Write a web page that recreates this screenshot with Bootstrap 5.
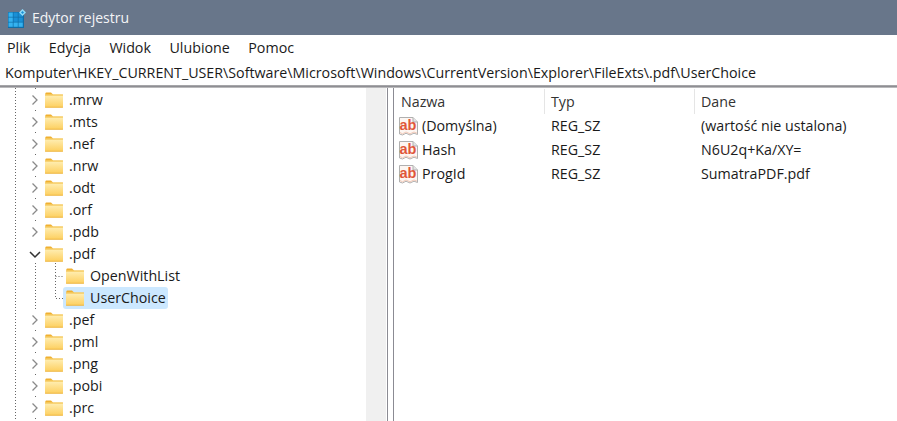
<!DOCTYPE html>
<html lang="pl">
<head>
<meta charset="utf-8">
<title>Edytor rejestru</title>
<link href="https://cdn.jsdelivr.net/npm/bootstrap@5.3.0/dist/css/bootstrap.min.css" rel="stylesheet">
<style>
html,body{height:421px;overflow:hidden;background:#fff}
body{font-family:"Open Sans","Noto Sans",sans-serif;font-size:14.25px;color:#1a1a1a;line-height:20px}
.titlebar{height:35px;background:#68768a;color:#f4f5f7;padding-left:7px;gap:6px;font-size:14px}
.menubar{height:25px;gap:18.5px;padding:0 7px;font-size:14.25px}
.addr{height:25px;padding-left:5px;white-space:nowrap}
.rule{height:3px;background:#8e8e93;border-top:1px solid #a5a5a8;border-bottom:1px solid #b9b9bb}
.panes{height:333px;overflow:hidden}
.treepane{width:366px;position:relative;padding-top:1px}
.trow{height:22px;padding-left:29px}
.trow.sub{padding-left:63px}
.chev{width:12px;height:12px;flex:none;margin-right:4px}
.fold{width:18px;height:16px;flex:none;margin-right:6px}
.sub .fold{margin-left:3px}
.sel{background:#cce8ff;border-radius:3px;padding-right:2px;height:22px}
.guides{position:absolute;left:0;top:0;width:366px;height:333px;pointer-events:none}
.scrollstrip{width:20px;background:#f0f0f0}
.gap1{width:1px}
.vline{width:1px;background:#8b8b93}
.gap5{width:5px}
.listpane{flex:1;padding-top:1px}
.hrow{height:25px;color:#333}
.cname{width:151px;padding-left:7px}
.ctype{width:150px;padding-left:6px}
.hrow .cname,.hrow .ctype{border-right:1px solid #e5e5e5;height:25px;line-height:25px}
.hrow .cdata{padding-left:6px;line-height:25px}
.lrow{height:24px}
.lrow .cname{padding-left:4px;display:flex;align-items:center;gap:3px}
.lrow .cdata{padding-left:6px}
.ab{width:21px;height:21px;flex:none}
.gapfix{margin-top:1px}
</style>
</head>
<body>
<svg width="0" height="0" class="d-block" style="position:absolute">
<defs>
<linearGradient id="fg" x1="0" y1="0" x2="0" y2="1"><stop offset="0" stop-color="#fff0b8"/><stop offset="1" stop-color="#fdcf5e"/></linearGradient>
<symbol id="folder" viewBox="0 0 18 16">
<path d="M0.5 3V1.2Q0.5 .5 1.2 .5H6L8 2.5V3Z" fill="#f0b030"/>
<rect x="0" y="2.5" width="18" height="13" rx=".8" fill="url(#fg)"/>
<rect x="0" y="2.5" width="18" height="1" fill="#f2b93a"/>
<rect x="0" y="14.8" width="18" height=".8" fill="#e9b03c"/>
</symbol>
<symbol id="cr" viewBox="0 0 12 12"><path d="M3.5 1.5L8 6L3.5 10.5" fill="none" stroke="#8a8a8a" stroke-width="1.3"/></symbol>
<symbol id="cd" viewBox="0 0 12 12"><path d="M1 4L6 9L11 4" fill="none" stroke="#333" stroke-width="1.5"/></symbol>
<symbol id="abi" viewBox="0 0 21 21">
<path d="M1.5 1.5H15L19.5 6V18.5L16 17.2L12 19L8 17.2L4.5 19L1.5 18Z" fill="#fdf6f2" stroke="#b0b0b0" stroke-width="1"/>
<path d="M15 1.5V6H19.5" fill="#e4e4e4" stroke="#b0b0b0" stroke-width="1"/>
<path d="M2 16.5L4.5 17.8L8 16L12 17.8L16 16L19 17.2" fill="none" stroke="#f2c9b8" stroke-width="1"/>
<text x="10" y="14.2" text-anchor="middle" font-family="Liberation Sans" font-weight="700" font-size="14.5" fill="#e0573a">ab</text>
</symbol>
</defs>
</svg>

<div class="titlebar d-flex align-items-center">
<svg width="19" height="19" viewBox="0 0 19 19" class="gapfix">
<rect x="1" y="3" width="16" height="16" fill="#0f6ea8"/>
<g fill="#35b2f0"><rect x="1.5" y="3.5" width="4.3" height="4.3"/><rect x="6.5" y="3.5" width="4.3" height="4.3" fill="#1a90d6"/><rect x="11.5" y="3.5" width="4.3" height="4.3" fill="#1a90d6"/>
<rect x="1.5" y="8.5" width="4.3" height="4.3"/><rect x="6.5" y="8.5" width="4.3" height="4.3" fill="#1a90d6"/><rect x="11.5" y="8.5" width="4.3" height="4.3" fill="#1a90d6"/>
<rect x="1.5" y="13.5" width="4.3" height="4.3"/><rect x="6.5" y="13.5" width="4.3" height="4.3"/><rect x="11.5" y="13.5" width="4.3" height="4.3"/></g>
<path d="M15.5 0L19 3.5L15.5 7L12 3.5Z" fill="#8fdcfa"/>
<path d="M15.5 2L17 3.5L15.5 5L14 3.5Z" fill="#1a90d6"/>
</svg>
<span>Edytor rejestru</span>
</div>
<div class="menubar d-flex align-items-center"><span>Plik</span><span>Edycja</span><span>Widok</span><span>Ulubione</span><span>Pomoc</span></div>
<div class="addr d-flex align-items-center">Komputer\HKEY_CURRENT_USER\Software\Microsoft\Windows\CurrentVersion\Explorer\FileExts\.pdf\UserChoice</div>
<div class="rule"></div>
<div class="panes d-flex">
<div class="treepane">
<svg class="guides"><g fill="none" stroke="#666">
<path d="M15.5 0V333" stroke-dasharray="1 2"/>
<path d="M35.5 0V154M35.5 220V333" stroke-dasharray="1 21"/>
<path d="M35.5 175V220" stroke-dasharray="1 2"/>
<path d="M55.5 175V210.5H63M55.5 188.5H63" stroke-dasharray="1 2"/>
</g></svg>
<div class="trow d-flex align-items-center"><svg class="chev"><use href="#cr"/></svg><svg class="fold"><use href="#folder"/></svg>.mrw</div>
<div class="trow d-flex align-items-center"><svg class="chev"><use href="#cr"/></svg><svg class="fold"><use href="#folder"/></svg>.mts</div>
<div class="trow d-flex align-items-center"><svg class="chev"><use href="#cr"/></svg><svg class="fold"><use href="#folder"/></svg>.nef</div>
<div class="trow d-flex align-items-center"><svg class="chev"><use href="#cr"/></svg><svg class="fold"><use href="#folder"/></svg>.nrw</div>
<div class="trow d-flex align-items-center"><svg class="chev"><use href="#cr"/></svg><svg class="fold"><use href="#folder"/></svg>.odt</div>
<div class="trow d-flex align-items-center"><svg class="chev"><use href="#cr"/></svg><svg class="fold"><use href="#folder"/></svg>.orf</div>
<div class="trow d-flex align-items-center"><svg class="chev"><use href="#cr"/></svg><svg class="fold"><use href="#folder"/></svg>.pdb</div>
<div class="trow d-flex align-items-center"><svg class="chev"><use href="#cd"/></svg><svg class="fold"><use href="#folder"/></svg>.pdf</div>
<div class="trow sub d-flex align-items-center"><svg class="fold"><use href="#folder"/></svg>OpenWithList</div>
<div class="trow sub d-flex align-items-center"><div class="sel d-flex align-items-center"><svg class="fold"><use href="#folder"/></svg>UserChoice</div></div>
<div class="trow d-flex align-items-center"><svg class="chev"><use href="#cr"/></svg><svg class="fold"><use href="#folder"/></svg>.pef</div>
<div class="trow d-flex align-items-center"><svg class="chev"><use href="#cr"/></svg><svg class="fold"><use href="#folder"/></svg>.pml</div>
<div class="trow d-flex align-items-center"><svg class="chev"><use href="#cr"/></svg><svg class="fold"><use href="#folder"/></svg>.png</div>
<div class="trow d-flex align-items-center"><svg class="chev"><use href="#cr"/></svg><svg class="fold"><use href="#folder"/></svg>.pobi</div>
<div class="trow d-flex align-items-center"><svg class="chev"><use href="#cr"/></svg><svg class="fold"><use href="#folder"/></svg>.prc</div>
</div>
<div class="scrollstrip"></div><div class="gap1"></div><div class="vline"></div><div class="gap5"></div><div class="vline"></div>
<div class="listpane">
<div class="hrow d-flex"><div class="cname">Nazwa</div><div class="ctype">Typ</div><div class="cdata">Dane</div></div>
<div class="lrow d-flex align-items-center"><div class="cname"><svg class="ab"><use href="#abi"/></svg>(Domyślna)</div><div class="ctype">REG_SZ</div><div class="cdata">(wartość nie ustalona)</div></div>
<div class="lrow d-flex align-items-center"><div class="cname"><svg class="ab"><use href="#abi"/></svg>Hash</div><div class="ctype">REG_SZ</div><div class="cdata">N6U2q+Ka/XY=</div></div>
<div class="lrow d-flex align-items-center"><div class="cname"><svg class="ab"><use href="#abi"/></svg>ProgId</div><div class="ctype">REG_SZ</div><div class="cdata">SumatraPDF.pdf</div></div>
</div>
</div>
<script src="https://cdn.jsdelivr.net/npm/bootstrap@5.3.0/dist/js/bootstrap.bundle.min.js"></script>
</body>
</html>
